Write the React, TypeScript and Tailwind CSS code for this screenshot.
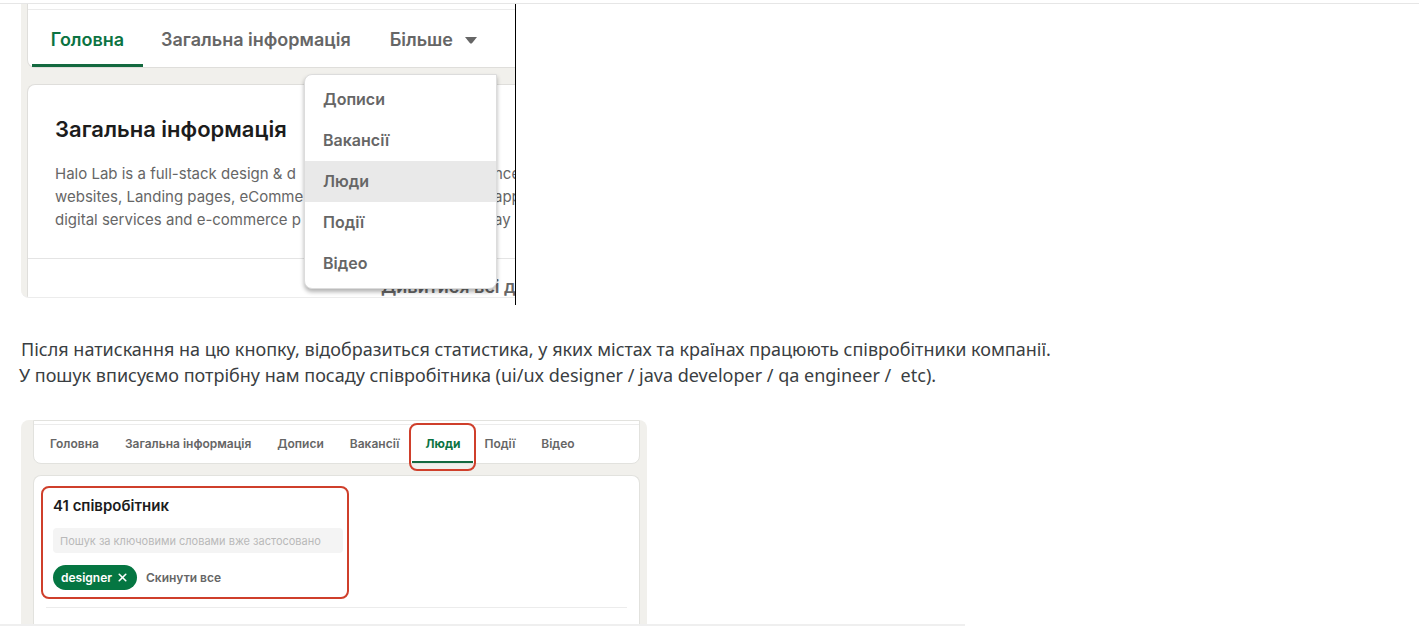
import { X } from "lucide-react";

const menuItems = ["Дописи", "Вакансії", "Люди", "Події", "Відео"];

const aboutLines = [
  ["Halo Lab is a full-stack design & d", "nce"],
  ["websites, Landing pages, eComme", "app"],
  ["digital services and e-commerce p", "ay"],
];

const tabs = ["Головна", "Загальна інформація", "Дописи", "Вакансії", "Люди", "Події", "Відео"];

function AboutFigure() {
  return (
    <section className="h-[301px] w-[495px] border-r border-black font-['Inter',sans-serif] text-[#666666]">
      <div className="flex h-[294px] flex-col overflow-hidden rounded-bl-lg border-b border-[#ececec] bg-[#f1f0ec] pl-[6px]">
        <div className="relative shrink-0 rounded-bl-lg border-b border-l border-[#dfdedb] bg-white">
          <div className="h-[6px] border-b border-[#ebebeb]" />
          <nav className="flex h-[57px] items-stretch pl-1 text-lg font-semibold">
            <a href="#home" className="flex w-[111px] items-center justify-center border-b-3 border-[#13693f] pt-[6px] text-[#0b7342]">
              Головна
            </a>
            <a href="#about" className="ml-[18px] flex items-center pt-[6px] pb-[3px]">
              Загальна інформація
            </a>
            <button type="button" className="ml-[39px] flex items-center gap-3 pt-[6px] pb-[3px]">
              Більше
              <svg viewBox="0 0 12 7" className="h-[7px] w-3" fill="currentColor" aria-hidden="true">
                <path d="M0 0h12L7 6.2Q6 7 5 6.2z" />
              </svg>
            </button>
          </nav>
          <ul className="absolute top-[70px] left-[276px] z-10 w-[193px] rounded-lg rounded-tr-none border border-[#dcdcdc] bg-white pt-1 pb-1 text-base font-semibold shadow-[0_3px_4px_rgba(0,0,0,0.3)]">
            {menuItems.map((item) => (
              <li key={item}>
                <a
                  href="#menu"
                  className={
                    item === "Люди"
                      ? "flex h-[41px] items-center bg-[#e9e9e9] pb-[2px] pl-[18px]"
                      : "flex h-[41px] items-center pb-[2px] pl-[18px]"
                  }
                >
                  {item}
                </a>
              </li>
            ))}
          </ul>
        </div>
        <article className="mt-4 flex-1 rounded-tl-lg border-t border-l border-[#dfdedb] bg-white">
          <h2 className="mt-7 ml-[27px] text-[22px] leading-8 font-semibold text-[#1c1c1c]">Загальна інформація</h2>
          <div className="mt-[17px] ml-[27px] text-[15px] leading-[23px]">
            {aboutLines.map(([start, end]) => (
              <p key={start} className="flex">
                <span className="w-[439px] shrink-0 whitespace-nowrap">{start}</span>
                <span>{end}</span>
              </p>
            ))}
          </div>
          <a
            href="#all"
            className="mt-[27px] block overflow-hidden border-t border-[#e4e4e4] pt-[14px] pl-[353px] text-lg font-semibold whitespace-nowrap"
          >
            Дивитися всі д
          </a>
        </article>
      </div>
    </section>
  );
}

function PeopleFigure() {
  return (
    <section className="w-[626px] rounded-t-lg bg-[#f1f0ec] pr-[7px] pl-3 font-['Inter',sans-serif] text-[#666666]">
      <div className="rounded-b-lg border border-[#e2e2de] bg-white">
        <div className="h-[4px] border-b border-[#ececec]" />
        <nav className="flex h-[38px] items-center pl-4 text-xs font-semibold">
          {tabs.map((tab) =>
            tab === "Люди" ? (
              <a
                key={tab}
                href="#people"
                className="relative mt-[6px] mr-2 -ml-4 flex h-[48px] w-[67px] items-center justify-center rounded-lg border-2 border-[#cf3f2b] font-bold text-[#0b7342] after:absolute after:inset-x-[1px] after:bottom-[6px] after:h-[2px] after:bg-[#13693f]"
              >
                <span className="-mt-[6px]">{tab}</span>
              </a>
            ) : (
              <a key={tab} href="#tab" className="mr-[26px]">
                {tab}
              </a>
            ),
          )}
        </nav>
      </div>
      <div className="mt-[11px] h-[170px] rounded-t-lg border border-b-0 border-[#e2e2de] bg-white px-[7px] pt-[10px]">
        <form className="h-[113px] w-[308px] rounded-lg border-2 border-[#cf3f2b] pl-[10px]">
          <h2 className="mt-[6px] text-[15px] leading-6 font-semibold text-[#1c1c1c]">41 співробітник</h2>
          <input
            type="text"
            aria-label="Пошук за ключовими словами"
            placeholder="Пошук за ключовими словами вже застосовано"
            className="mt-[10px] block h-[25px] w-[290px] rounded-sm bg-[#f4f4f4] px-[7px] text-[11px] placeholder:text-[#b9b9b9]"
          />
          <div className="mt-3 flex items-center gap-[9px] text-xs font-semibold">
            <button type="button" className="flex h-[25px] w-[84px] items-center justify-center gap-1 rounded-full bg-[#057642] text-white">
              designer
              <X className="size-[13px]" strokeWidth={3} aria-hidden="true" />
            </button>
            <button type="button">Скинути все</button>
          </div>
        </form>
        <hr className="mx-[5px] mt-2 border-[#ececec]" />
      </div>
    </section>
  );
}

export default function App() {
  return (
    <div className="h-screen overflow-hidden bg-white pt-[3px]">
      <main className="border-t border-[#e6e6e6] pl-[21px]">
        <AboutFigure />
        <div className="mt-[31px] -ml-[2px] font-['Noto_Sans',sans-serif] text-[18px] leading-[26px] whitespace-pre text-[#3a3e42]">
          <p className="pl-[2px]">
            Після натискання на цю кнопку, відобразиться статистика, у яких містах та країнах працюють співробітники компанії.
          </p>
          <p>У пошук вписуємо потрібну нам посаду співробітника (ui/ux designer / java developer / qa engineer /  etc).</p>
        </div>
        <div className="mt-8">
          <PeopleFigure />
        </div>
      </main>
      <div className="fixed bottom-0 left-0 h-[2px] w-[68%] bg-[#efefef]" />
    </div>
  );
}
